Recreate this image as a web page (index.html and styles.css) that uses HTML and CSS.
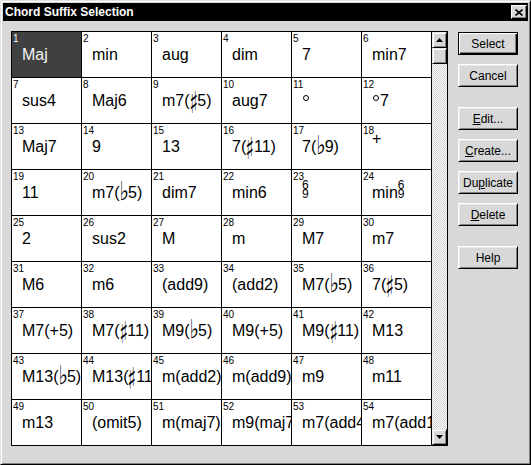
FILE: index.html
```html
<!DOCTYPE html>
<html lang="en">
<head>
    <meta charset="UTF-8">
    <title>Chord Suffix Selection</title>
    <link rel="stylesheet" href="styles.css">
</head>
<body>
    <div class="window">
        <div class="titlebar">
            <span>Chord Suffix Selection</span>
            <span class="close">
                <svg width="8" height="7" viewBox="0 0 8 7"><path d="M0.5 0.5L7.5 6.5M7.5 0.5L0.5 6.5" stroke="#000" stroke-width="1.6"/></svg>
            </span>
        </div>
        <div class="main">
            <div class="listbox">
                <div class="grid">
                    <div class="cell selected"><div class="num">1</div><div class="sfx">Maj</div></div>
                    <div class="cell"><div class="num">2</div><div class="sfx">min</div></div>
                    <div class="cell"><div class="num">3</div><div class="sfx">aug</div></div>
                    <div class="cell"><div class="num">4</div><div class="sfx">dim</div></div>
                    <div class="cell"><div class="num">5</div><div class="sfx">7</div></div>
                    <div class="cell"><div class="num">6</div><div class="sfx">min7</div></div>

                    <div class="cell"><div class="num">7</div><div class="sfx">sus4</div></div>
                    <div class="cell"><div class="num">8</div><div class="sfx">Maj6</div></div>
                    <div class="cell"><div class="num">9</div><div class="sfx">m7(<span class="sharp">♯</span>5)</div></div>
                    <div class="cell"><div class="num">10</div><div class="sfx">aug7</div></div>
                    <div class="cell"><div class="num">11</div><div class="sfx"><span class="deg"></span></div></div>
                    <div class="cell"><div class="num">12</div><div class="sfx"><span class="deg"></span>7</div></div>

                    <div class="cell"><div class="num">13</div><div class="sfx">Maj7</div></div>
                    <div class="cell"><div class="num">14</div><div class="sfx">9</div></div>
                    <div class="cell"><div class="num">15</div><div class="sfx">13</div></div>
                    <div class="cell"><div class="num">16</div><div class="sfx">7(<span class="sharp">♯</span>11)</div></div>
                    <div class="cell"><div class="num">17</div><div class="sfx">7(<span class="flat">♭</span>9)</div></div>
                    <div class="cell"><div class="num">18</div><div class="sfx"><span class="plus">+</span></div></div>

                    <div class="cell"><div class="num">19</div><div class="sfx">11</div></div>
                    <div class="cell"><div class="num">20</div><div class="sfx">m7(<span class="flat">♭</span>5)</div></div>
                    <div class="cell"><div class="num">21</div><div class="sfx">dim7</div></div>
                    <div class="cell"><div class="num">22</div><div class="sfx">min6</div></div>
                    <div class="cell"><div class="num">23</div><div class="sfx"><span class="stack"><span>6</span><span>9</span></span></div></div>
                    <div class="cell"><div class="num">24</div><div class="sfx">min<span class="stack"><span>6</span><span>9</span></span></div></div>

                    <div class="cell"><div class="num">25</div><div class="sfx">2</div></div>
                    <div class="cell"><div class="num">26</div><div class="sfx">sus2</div></div>
                    <div class="cell"><div class="num">27</div><div class="sfx">M</div></div>
                    <div class="cell"><div class="num">28</div><div class="sfx">m</div></div>
                    <div class="cell"><div class="num">29</div><div class="sfx">M7</div></div>
                    <div class="cell"><div class="num">30</div><div class="sfx">m7</div></div>

                    <div class="cell"><div class="num">31</div><div class="sfx">M6</div></div>
                    <div class="cell"><div class="num">32</div><div class="sfx">m6</div></div>
                    <div class="cell"><div class="num">33</div><div class="sfx">(add9)</div></div>
                    <div class="cell"><div class="num">34</div><div class="sfx">(add2)</div></div>
                    <div class="cell"><div class="num">35</div><div class="sfx">M7(<span class="flat">♭</span>5)</div></div>
                    <div class="cell"><div class="num">36</div><div class="sfx">7(<span class="sharp">♯</span>5)</div></div>

                    <div class="cell"><div class="num">37</div><div class="sfx">M7(+5)</div></div>
                    <div class="cell"><div class="num">38</div><div class="sfx">M7(<span class="sharp">♯</span>11)</div></div>
                    <div class="cell"><div class="num">39</div><div class="sfx">M9(<span class="flat">♭</span>5)</div></div>
                    <div class="cell"><div class="num">40</div><div class="sfx">M9(+5)</div></div>
                    <div class="cell"><div class="num">41</div><div class="sfx">M9(<span class="sharp">♯</span>11)</div></div>
                    <div class="cell"><div class="num">42</div><div class="sfx">M13</div></div>

                    <div class="cell"><div class="num">43</div><div class="sfx">M13(<span class="flat">♭</span>5)</div></div>
                    <div class="cell"><div class="num">44</div><div class="sfx">M13(<span class="sharp">♯</span>11)</div></div>
                    <div class="cell"><div class="num">45</div><div class="sfx">m(add2)</div></div>
                    <div class="cell"><div class="num">46</div><div class="sfx">m(add9)</div></div>
                    <div class="cell"><div class="num">47</div><div class="sfx">m9</div></div>
                    <div class="cell"><div class="num">48</div><div class="sfx">m11</div></div>

                    <div class="cell"><div class="num">49</div><div class="sfx">m13</div></div>
                    <div class="cell"><div class="num">50</div><div class="sfx">(omit5)</div></div>
                    <div class="cell"><div class="num">51</div><div class="sfx">m(maj7)</div></div>
                    <div class="cell"><div class="num">52</div><div class="sfx">m9(maj7)</div></div>
                    <div class="cell"><div class="num">53</div><div class="sfx">m7(add4)</div></div>
                    <div class="cell"><div class="num">54</div><div class="sfx">m7(add11)</div></div>
                </div>
                <div class="scrollbar">
                    <div class="sb-btn">
                        <svg width="7" height="4" viewBox="0 0 7 4"><path d="M3.5 0L7 4H0z" fill="#000"/></svg>
                    </div>
                    <div class="sb-btn"></div>
                    <div class="track"></div>
                    <div class="sb-btn">
                        <svg width="7" height="4" viewBox="0 0 7 4"><path d="M0 0h7L3.5 4z" fill="#000"/></svg>
                    </div>
                </div>
            </div>
            <div class="buttons">
                <button class="btn default">Select</button>
                <button class="btn">Cancel</button>
                <button class="btn group"><u>E</u>dit...</button>
                <button class="btn"><u>C</u>reate...</button>
                <button class="btn">Du<u>p</u>licate</button>
                <button class="btn"><u>D</u>elete</button>
                <button class="btn group">Help</button>
            </div>
        </div>
    </div>
</body>
</html>
```

FILE: styles.css
```css
body {
    margin: 0;
    font-family: "Liberation Sans", Arial, sans-serif;
}
.window {
    width: 531px;
    height: 465px;
    box-sizing: border-box;
    background: #d8d8d8;
    border: 1px solid;
    border-color: #e0e0e0 #000 #000 #e0e0e0;
    box-shadow: inset 1px 1px #fff, inset -1px -1px #808080;
    padding: 2px;
}
.titlebar {
    height: 18px;
    background: #000;
    color: #fff;
    display: flex;
    align-items: center;
    justify-content: space-between;
    padding: 0 1px 0 2px;
    font-size: 12px;
    font-weight: bold;
}
.close {
    width: 16px;
    height: 14px;
    box-sizing: border-box;
    background: #d8d8d8;
    border: 1px solid;
    border-color: #fff #000 #000 #fff;
    box-shadow: inset -1px -1px #808080;
    display: flex;
    align-items: center;
    justify-content: center;
}
.main {
    display: flex;
    align-items: flex-start;
    padding: 10px 0 0 8px;
}
.listbox {
    display: flex;
    border: 1px solid #000;
}
.grid {
    display: grid;
    grid-template-columns: repeat(6, 70px);
    grid-template-rows: repeat(8, 46px) 45px;
    background: #fff;
}
.cell {
    box-sizing: border-box;
    border-right: 1px solid #000;
    border-bottom: 1px solid #000;
    overflow: hidden;
    white-space: nowrap;
}
.cell:nth-last-child(-n+6) {
    border-bottom: none;
}
.cell.selected {
    background: #404040;
    color: #f4f4f4;
}
.num {
    font-size: 10px;
    line-height: 10px;
    padding: 2px 0 0 1px;
}
.sfx {
    font-size: 16px;
    line-height: 18px;
    padding-left: 10px;
    margin-top: 2px;
}
.sharp, .flat {
    display: inline-block;
    font-family: "DejaVu Sans", sans-serif;
    font-size: 20px;
    line-height: 0;
}
.sharp {
    font-weight: bold;
    margin: 0 -1px;
    transform: translateY(3px) scale(0.9, 1.5);
}
.flat {
    margin: 0 -1px 0 0;
    transform-origin: 50% 100%;
    transform: scaleY(1.3);
}
.deg {
    display: inline-block;
    width: 4px;
    height: 4px;
    border: 1px solid #000;
    border-radius: 50%;
    vertical-align: 5px;
    margin: 0 1px 0 1px;
}
.plus {
    display: inline-block;
    font-size: 16px;
    line-height: 0;
    vertical-align: 8px;
}
.stack {
    display: inline-block;
    font-size: 12px;
    line-height: 9px;
    margin-top: -12px;
}
.stack span {
    display: block;
}
.scrollbar {
    width: 15px;
    display: flex;
    flex-direction: column;
}
.sb-btn {
    height: 16px;
    box-sizing: border-box;
    background: #d8d8d8;
    border: 1px solid;
    border-color: #e8e8e8 #000 #000 #e8e8e8;
    box-shadow: inset 1px 1px #fff, inset -1px -1px #808080;
    display: flex;
    align-items: center;
    justify-content: center;
}
.track {
    flex: 1;
    background: repeating-conic-gradient(#fff 0 25%, #d0d0d0 0 50%) 0 0 / 2px 2px;
}
.buttons {
    display: flex;
    flex-direction: column;
    gap: 9px;
    margin: 1px 0 0 10px;
}
.btn {
    width: 60px;
    height: 23px;
    box-sizing: border-box;
    padding: 0;
    background: #d8d8d8;
    border: 1px solid;
    border-color: #fff #000 #000 #fff;
    box-shadow: inset 1px 1px #e8e8e8, inset -1px -1px #808080;
    font-family: "Liberation Sans", Arial, sans-serif;
    font-size: 12px;
    color: #000;
}
.btn.default {
    border-color: #000;
    box-shadow: inset 1px 1px #fff, inset -1px -1px #000, inset -2px -2px #808080;
}
.btn.group {
    margin-top: 11px;
}
```
